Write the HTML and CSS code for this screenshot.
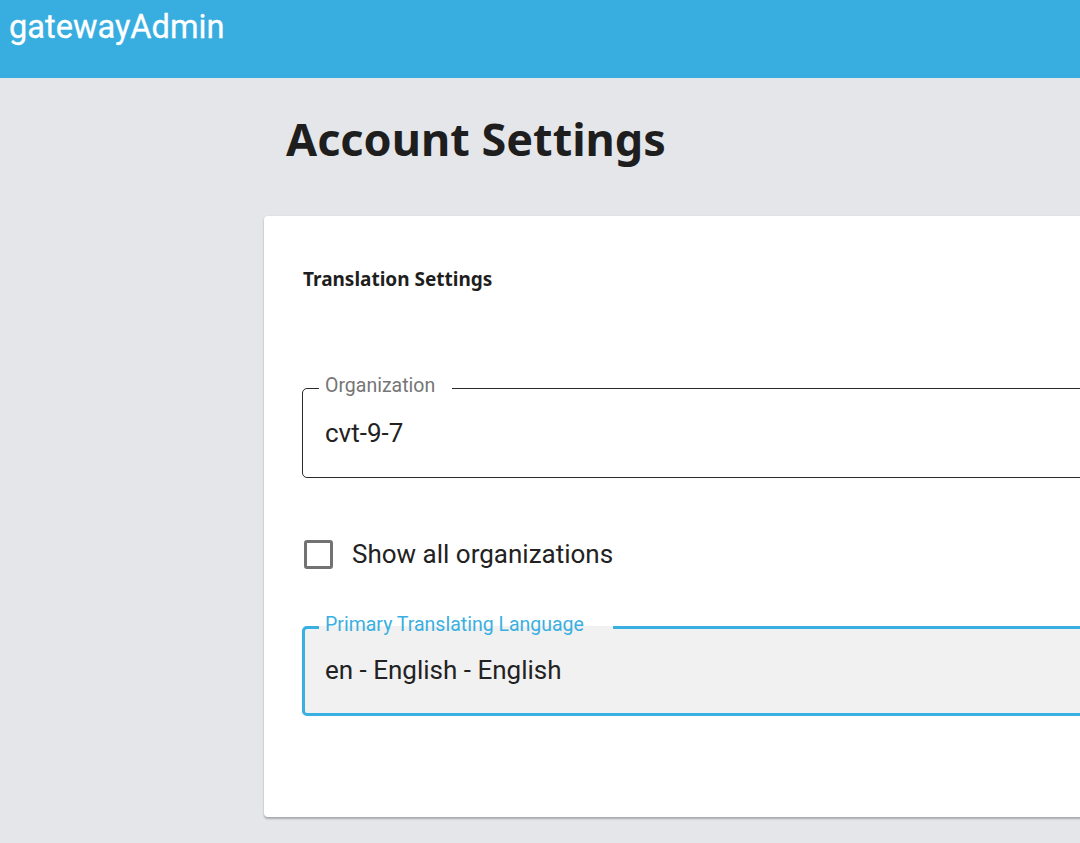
FILE: index.html
```html
<!DOCTYPE html>
<html lang="en">
<head>
<meta charset="utf-8">
<title>gatewayAdmin - Account Settings</title>
<link rel="stylesheet" href="styles.css">
</head>
<body>
<header class="appbar">
  <div class="brand">gatewayAdmin</div>
</header>
<main class="page">
  <h1 class="page-title">Account Settings</h1>
  <section class="card">
    <h2 class="card-title">Translation Settings</h2>
    <fieldset class="field field--org">
      <legend class="field-label">Organization</legend>
      <div class="field-value">cvt-9-7</div>
    </fieldset>
    <label class="check">
      <span class="check-box"></span>
      <span class="check-text">Show all organizations</span>
    </label>
    <fieldset class="field field--focused">
      <legend class="field-label">Primary Translating Language</legend>
      <div class="field-value">en - English - English</div>
    </fieldset>
  </section>
</main>
</body>
</html>
```
FILE: styles.css
```css
html, body {
  margin: 0;
  padding: 0;
  overflow: hidden;
}
body {
  background: #e5e6ea;
  font-family: Roboto, "Liberation Sans", sans-serif;
  color: #222;
  min-height: 843px;
}
.appbar {
  height: 78px;
  background: #38aee0;
  padding-left: 9px;
  box-sizing: border-box;
}
.brand {
  color: #fff;
  font-family: Roboto, sans-serif;
  font-weight: 400;
  font-size: 32.6px;
  line-height: 32px;
  padding-top: 11px;
  -webkit-text-stroke: 0.3px #fff;
}
.page {
  padding-left: 264px;
  width: 1000px;
}
.page-title {
  margin: 0;
  padding: 31px 0 0 22px;
  font-family: "Noto Sans", sans-serif;
  font-weight: 700;
  font-size: 45px;
  line-height: 60px;
  color: #1e1e1e;
}
.card {
  margin-top: 47px;
  background: #fff;
  border-radius: 4px;
  box-shadow: 0 2px 2px rgba(0,0,0,0.25), 0 0 2px rgba(0,0,0,0.08);
  padding: 51px 0 101px 39px;
  width: 900px;
  box-sizing: border-box;
}
.card-title {
  margin: 0;
  font-family: "Noto Sans", sans-serif;
  font-weight: 700;
  font-size: 19px;
  line-height: 24px;
  color: #1e1e1e;
}
.field {
  margin: 0 0 0 -1px;
  padding: 0 0 0 22px;
  border: 1px solid #2a2a2a;
  border-radius: 5px;
  box-sizing: border-box;
}
.field--org {
  margin-top: 85px;
  height: 102px;
}
.field-label {
  font-size: 19.5px;
  line-height: 20px;
  color: #767676;
  padding: 0 17px 4px 6px;
  margin-left: -6px;
}
.field-value {
  font-size: 26px;
  line-height: 30px;
  padding-top: 18px;
  color: #222;
}
.field--focused {
  margin-top: 46px;
  height: 101px;
  border: 3px solid #3aafe1;
  background-color: #f1f1f1;
  padding-left: 20px;
}
.field--focused .field-label {
  color: #3aafe1;
  padding-right: 29px;
}
.field--focused .field-value {
  padding-top: 16px;
}
.check {
  display: flex;
  align-items: center;
  gap: 19px;
  margin-top: 61px;
  margin-left: 1px;
  height: 30px;
}
.check-box {
  width: 29px;
  height: 29px;
  box-sizing: border-box;
  border: 3px solid #727272;
  border-radius: 3px;
}
.check-text {
  font-size: 26px;
  line-height: 30px;
  color: #222;
}
```
